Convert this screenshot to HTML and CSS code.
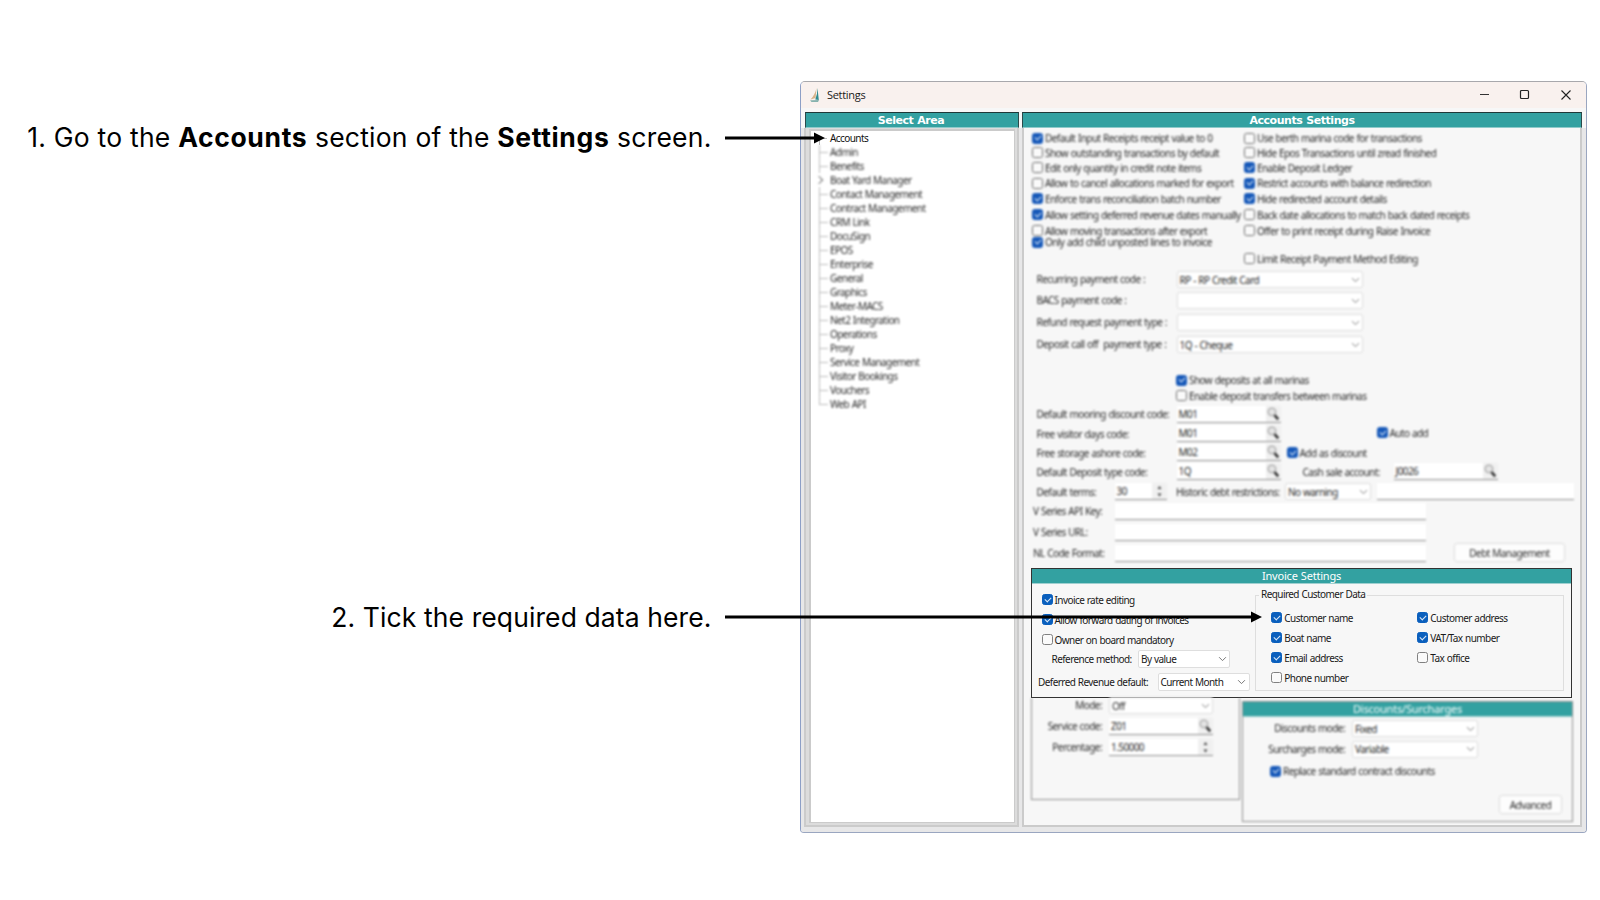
FILE: index.html
```html
<!DOCTYPE html>
<html lang="en">
<head>
<meta charset="utf-8">
<title>Settings</title>
<link rel="stylesheet" href="styles.css">
</head>
<body>
<svg class="defs" aria-hidden="true">
  <symbol id="chev" viewBox="0 0 10 6"><path d="M1.2 1l3.8 3.8L8.8 1" fill="none" stroke="#777" stroke-width="1.1"/></symbol>
  <symbol id="mag" viewBox="0 0 14 15"><circle cx="5.5" cy="5.5" r="3.6" fill="#e4e4e4" stroke="#aaa" stroke-width="1.2"/><path d="M8 8.600l3.4 4" stroke="#333" stroke-width="2.4"/></symbol>
  <symbol id="spin" viewBox="0 0 12 16"><path d="M4 6l2-3 2 3zM4 10.500l2 3 2-3z" fill="#444"/></symbol>
</svg>
<main class="page">
  <section class="callouts">
    <p class="callout first">1. Go to the <b>Accounts</b> section of the <b>Settings</b> screen.</p>
    <p class="callout second">2. Tick the required data here.</p>
  </section>
  <section class="window">
    <header class="titlebar">
      <svg class="logo" viewBox="0 0 12 16"><path d="M7.500 1L6.600 11 1.500 12.500Q6 8 7.500 1z" fill="#d8b48c"/><path d="M8.500 1l1.300 12-3.500-.6Q8.500 7 8.500 1z" fill="#2f8c90"/><path d="M1 13.500l9-.3-1 1.500H2.500z" fill="#5f9c98"/></svg>
      <span class="title">Settings</span>
      <svg class="controls" viewBox="0 0 92 12"><path d="M0 5.500h9" stroke="#333"/><rect x="40.500" y="1.500" width="8" height="8" rx="1" fill="none" stroke="#222" stroke-width="1.200"/><path d="M81.500 1.500l9 9M90.500 1.500l-9 9" stroke="#222" stroke-width="1.100"/></svg>
    </header>
    <div class="heads"><h2 class="head area">Select Area</h2><h2 class="head acc">Accounts Settings</h2></div>
    <div class="body">
      <nav class="listbox">
        <ul class="tree">
          <li class="active">Accounts</li><li>Admin</li><li>Benefits</li><li class="parent">Boat Yard Manager</li><li>Contact Management</li><li>Contract Management</li><li>CRM Link</li><li>DocuSign</li><li>EPOS</li><li>Enterprise</li><li>General</li><li>Graphics</li><li>Meter-MACS</li><li>Net2 Integration</li><li>Operations</li><li>Proxy</li><li>Service Management</li><li>Visitor Bookings</li><li>Vouchers</li><li>Web API</li>
        </ul>
      </nav>
      <div class="settings">
        <div class="soft upper">
          <div class="checks">
            <div class="col left">
              <label class="ck on"><i></i>Default Input Receipts receipt value to 0</label>
              <label class="ck"><i></i>Show outstanding transactions by default</label>
              <label class="ck"><i></i>Edit only quantity in credit note items</label>
              <label class="ck"><i></i>Allow to cancel allocations marked for export</label>
              <label class="ck on"><i></i>Enforce trans reconciliation batch number</label>
              <label class="ck on"><i></i>Allow setting deferred revenue dates manually</label>
              <label class="ck"><i></i>Allow moving transactions after export</label>
              <label class="ck on"><i></i>Only add child unposted lines to invoice</label>
            </div>
            <div class="col right">
              <label class="ck"><i></i>Use berth marina code for transactions</label>
              <label class="ck"><i></i>Hide Epos Transactions until zread finished</label>
              <label class="ck on"><i></i>Enable Deposit Ledger</label>
              <label class="ck on"><i></i>Restrict accounts with balance redirection</label>
              <label class="ck on"><i></i>Hide redirected account details</label>
              <label class="ck"><i></i>Back date allocations to match back dated receipts</label>
              <label class="ck"><i></i>Offer to print receipt during Raise Invoice</label>
              <label class="ck"><i></i>Limit Receipt Payment Method Editing</label>
            </div>
          </div>
          <div class="selects">
            <span>Recurring payment code :</span><div class="sel">RP - RP Credit Card<svg><use href="#chev"/></svg></div>
            <span>BACS payment code :</span><div class="sel"><svg><use href="#chev"/></svg></div>
            <span>Refund request payment type :</span><div class="sel"><svg><use href="#chev"/></svg></div>
            <span>Deposit call off&nbsp; payment type :</span><div class="sel">1Q - Cheque<svg><use href="#chev"/></svg></div>
          </div>
          <div class="deposits">
            <label class="ck on"><i></i>Show deposits at all marinas</label>
            <label class="ck"><i></i>Enable deposit transfers between marinas</label>
          </div>
          <div class="codes">
            <div class="row"><span class="lab">Default mooring discount code:</span><div class="inp code">M01<svg><use href="#mag"/></svg></div></div>
            <div class="row"><span class="lab">Free visitor days code:</span><div class="inp code">M01<svg><use href="#mag"/></svg></div><label class="ck on auto"><i></i>Auto add</label></div>
            <div class="row"><span class="lab">Free storage ashore code:</span><div class="inp code">M02<svg><use href="#mag"/></svg></div><label class="ck on disc"><i></i>Add as discount</label></div>
            <div class="row"><span class="lab">Default Deposit type code:</span><div class="inp code">1Q<svg><use href="#mag"/></svg></div><span class="cash">Cash sale account:</span><div class="inp code">J0026<svg><use href="#mag"/></svg></div></div>
            <div class="row terms"><span class="short">Default terms:</span><div class="inp spin">30<svg><use href="#spin"/></svg></div><span class="hist">Historic debt restrictions:</span><div class="sel warn">No warning<svg><use href="#chev"/></svg></div><div class="inp rest"></div></div>
          </div>
          <div class="series">
            <span>V Series API Key:</span><div class="inp"></div>
            <span>V Series URL:</span><div class="inp"></div>
            <span>NL Code Format:</span><div class="inp"></div><button class="btn">Debt Management</button>
          </div>
        </div>
        <section class="invoice">
          <h3 class="bar">Invoice Settings</h3>
          <div class="inv-body">
            <div class="inv-left">
              <label class="ck on"><i></i>Invoice rate editing</label>
              <label class="ck on"><i></i>Allow forward dating of invoices</label>
              <label class="ck"><i></i>Owner on board mandatory</label>
              <div class="row ref"><span>Reference method:</span><div class="sel">By value<svg><use href="#chev"/></svg></div></div>
              <div class="row def"><span>Deferred Revenue default:</span><div class="sel">Current Month<svg><use href="#chev"/></svg></div></div>
            </div>
            <div class="required">
              <span class="legend">Required Customer Data</span>
              <div class="opts">
                <label class="ck on"><i></i>Customer name</label><label class="ck on"><i></i>Customer address</label>
                <label class="ck on"><i></i>Boat name</label><label class="ck on"><i></i>VAT/Tax number</label>
                <label class="ck on"><i></i>Email address</label><label class="ck"><i></i>Tax office</label>
                <label class="ck"><i></i>Phone number</label>
              </div>
            </div>
          </div>
        </section>
        <div class="soft lower">
          <div class="interest">
            <span>Mode:</span><div class="sel">Off<svg><use href="#chev"/></svg></div>
            <span>Service code:</span><div class="inp">Z01<svg><use href="#mag"/></svg></div>
            <span>Percentage:</span><div class="inp">1.50000<svg><use href="#spin"/></svg></div>
          </div>
          <div class="discounts">
            <h3 class="bar">Discounts/Surcharges</h3>
            <div class="modes">
              <span>Discounts mode:</span><div class="sel">Fixed<svg><use href="#chev"/></svg></div>
              <span>Surcharges mode:</span><div class="sel">Variable<svg><use href="#chev"/></svg></div>
            </div>
            <label class="ck on"><i></i>Replace standard contract discounts</label>
            <button class="btn">Advanced</button>
          </div>
        </div>
      </div>
    </div>
  </section>
  <svg class="arrow one" width="100" height="12" viewBox="0 0 100 12"><path d="M0 6h91" stroke="#000" stroke-width="3"/><path d="M89 .5l11 5.500-11 5.500z"/></svg>
  <svg class="arrow two" width="537" height="12" viewBox="0 0 537 12"><path d="M0 6h528" stroke="#000" stroke-width="3"/><path d="M526 .5l11 5.500-11 5.500z"/></svg>
</main>
</body>
</html>
```
FILE: styles.css
```css
* { box-sizing: border-box; }
body { margin: 0; background: #fff; overflow: hidden; }
h2, h3, p, ul { margin: 0; padding: 0; }
.defs { display: none; }
.page { position: relative; display: flex; width: 1600px; height: 900px; padding-top: 81px; }

.callouts { flex: none; width: 800px; padding-right: 88.5px; text-align: right; }
.callout { font: 26.5px/36px Inter, sans-serif; color: #000; white-space: nowrap; }
.callout.first { margin-top: 38px; letter-spacing: .22px; }
.callout.first b { letter-spacing: .65px; }
.callout.second { margin-top: 443.5px; letter-spacing: .1px; }
.arrow { position: absolute; left: 725px; }
.arrow.one { top: 131.5px; }
.arrow.two { top: 611px; }

.window {
  flex: none; width: 787px; height: 752px; background: #f7f7f7;
  border: 1px solid #9aa6c0; border-top-color: #a8a8ac; border-left-color: #8d9fc6;
  border-radius: 5px 5px 4px 4px; overflow: hidden;
  font: 10px/12px "Noto Sans", sans-serif; letter-spacing: -.57px; word-spacing: .5px; color: #1a1a1a; white-space: nowrap;
}
.titlebar { display: flex; align-items: center; height: 26px; padding: 0 14px 0 8px; background: #f9f1ee; }
.logo { width: 12px; height: 16px; }
.title { margin-left: 6px; font: 11px/14px "Open Sans", sans-serif; letter-spacing: -.3px; }
.controls { width: 92px; height: 12px; margin-left: auto; }

.heads { display: flex; gap: 3px; height: 20px; padding: 4px 0 0 4px; }
.head {
  height: 16px; background: #33a1a1; border: 1px solid #2b4a4a; border-top: 1.500px solid #1f3838;
  border-bottom: 1px solid #8fcaca; color: #fff; text-align: center;
  font: bold 11px/15px "DejaVu Sans", sans-serif; letter-spacing: -.45px;
}
.area { width: 214px; padding-right: 2px; }
.acc { width: 560px; }

.body { display: flex; gap: 3px; height: 704px; padding: 0 0 5px 3px; background: #e7e7e8; }
.listbox { width: 215px; border: 2px solid #cbcbcb; border-top-width: 0; padding: 1px 2px 2px 3px; background: #dcdcdc; }
.tree { height: 100%; border: 2px solid #cbcbcb; border-right-width: 1.5px; border-bottom-width: 1px; background: #fff; list-style: none; }
.tree li { position: relative; height: 14px; padding-left: 19px; line-height: 14px; color: #2a2a2a; filter: blur(1px); }
.tree li::before { content: ""; position: absolute; left: 8px; top: 0; width: 8px; height: 7px; border-left: 1px solid #bbb; border-bottom: 1px solid #bbb; }
.tree li:not(:last-child)::after { content: ""; position: absolute; left: 8px; top: 7px; height: 7px; border-left: 1px solid #bbb; }
.tree li.active { color: #111; filter: none; }
.tree li.active::before { border-left: 0; }
.tree li.parent::before { left: 5px; top: 4px; width: 5px; height: 5px; border: solid #777; border-width: 1px 1px 0 0; transform: rotate(45deg); }
.tree li.parent::after { display: none; }

.settings { width: 560px; border: 2px solid #cbcbcb; border-top: 0; background: #f7f7f7; }
.soft { filter: blur(1px); color: #2a2a2a; }
.upper { height: 440px; }

.ck { display: flex; align-items: center; gap: 2px; height: 12px; line-height: 12px; }
.ck i { position: relative; flex: none; width: 11px; height: 11px; border: 1px solid #808080; border-radius: 2.500px; background: #fafafa; }
.ck.on i { border-color: #0a5fbd; background: #0a5fbd; }
.ck.on i::after { content: ""; position: absolute; left: 2px; top: 1.500px; width: 5px; height: 3px; border: solid #dbe9f8; border-width: 0 0 1px 1px; transform: rotate(-45deg); }
.soft .ck i { border-color: #6c6c6c; }
.soft .ck.on i { background: #1658b8; border-color: #1658b8; }

.checks { display: flex; height: 136.700px; padding-left: 8px; }
.col { display: grid; align-items: end; align-content: start; }
.left { width: 212px; grid-template-rows: 16.300px 14.400px 15px 15.600px 15.700px 16px 15.700px 11.600px; }
.right { grid-template-rows: 16.300px 14.400px 15px 15.600px 15.700px 16px 15.700px 28px; }

.sel, .inp { position: relative; display: flex; align-items: center; justify-content: space-between; height: 17px; padding: 0 2.5px 0 2px; background: #fff; }
.sel { border: 1px solid #dedede; border-radius: 2px; }
.inp { border-bottom: 1px solid #909090; padding-right: 0; }
.sel svg { width: 9px; height: 6px; margin-left: auto; }
.inp svg { width: 15px; height: 16px; margin-left: auto; background: #f0f0f0; }

.selects { display: grid; grid-template-columns: 140px 186.500px; grid-template-rows: 23.800px 20.700px 22.300px 22px; align-items: end; padding-left: 12.500px; }
.selects span { line-height: 17px; }
.deposits { display: grid; grid-template-rows: 32.800px 15.700px; align-items: end; padding-left: 152px; }
.codes { display: flex; flex-direction: column; gap: 2.1px; padding: 4px 0 0 12.500px; }
.row { display: flex; align-items: center; height: 17px; }
.lab { width: 140px; }
.code { width: 104px; }
.auto { margin: -2px 0 0 96px; }
.disc { margin-left: 6px; }
.cash { width: 91px; margin: 0 0 0 22px; }
.terms { margin-top: 1.100px; }
.short { width: 78px; }
.spin { width: 52px; }
.hist { width: 109px; margin-left: 9.500px; }
.warn { width: 86px; }
.rest { width: 197px; margin-left: 5.5px; }
.series { display: grid; grid-template-columns: 82px 311px 139px; grid-template-rows: 19.500px 20.700px 21px; align-items: end; padding-left: 9px; }
.series span { grid-column: 1; line-height: 17px; }
.series .inp { grid-column: 2; }
.btn { height: 19px; padding: 1px 0 0; border: 1px solid #dcdcdc; border-radius: 3px; background: #fdfdfd; font: inherit; letter-spacing: inherit; word-spacing: inherit; color: inherit; }
.series .btn { width: 111px; margin-left: 28px; }

.invoice { position: relative; width: 541px; height: 130px; margin-left: 7px; border: 1px solid #333; background: #f7f7f7; }
.bar { height: 15px; background: #33a1a1; border-bottom: 1px solid #9fd0d0; color: #fff; text-align: center; font: 11px/14px "Noto Sans", sans-serif; letter-spacing: -.2px; }
.inv-body { display: flex; }
.inv-left { display: grid; width: 223px; padding-left: 9.5px; grid-template-rows: 21.500px 20px 20px 21.500px 23.500px; align-items: end; align-content: start; }
.ref { padding-left: 10px; }
.ref span { width: 86.5px; }
.ref .sel { width: 92px; height: 18px; }
.def { margin-left: -3.5px; }
.def span { width: 119.500px; }
.def .sel { width: 92px; height: 18px; }
.required { position: relative; width: 309px; height: 96px; margin-top: 10.500px; border: 1px solid #dedede; }
.legend { position: absolute; left: 3px; top: -7.5px; padding: 0 2px; background: #f7f7f7; line-height: 13px; }
.opts { display: grid; grid-template-columns: 146px 150px; grid-template-rows: 28px 20.200px 20.200px 20px; align-items: end; padding-left: 15.3px; }

.lower { display: flex; align-items: flex-start; gap: 2px; padding-left: 7px; }
.interest { display: grid; grid-template-columns: 70px 104px; column-gap: 7px; grid-template-rows: 16px 21px 21px; align-items: end; align-content: start; width: 209px; height: 102px; border: 1.500px solid #8f8f8f; border-top: 0; }
.interest span, .modes span { text-align: right; line-height: 17px; }
.discounts { width: 331px; height: 121px; margin-top: 3px; border: 1.500px solid #8f8f8f; }
.modes { display: grid; grid-template-columns: 102px 126px; column-gap: 7px; grid-template-rows: 20px 20.800px; align-items: end; }
.discounts .ck { margin: 7.700px 0 0 27px; }
.discounts .btn { display: block; width: 63px; margin: 18px 0 0 256px; }
```
